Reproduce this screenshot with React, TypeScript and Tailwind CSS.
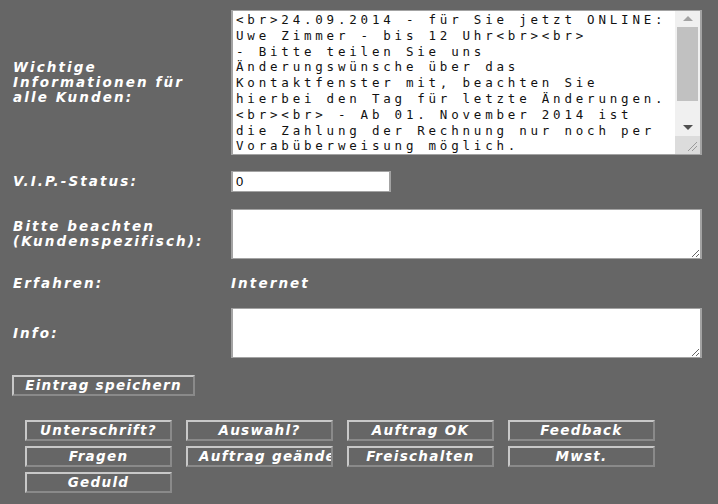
const infoText =
  "<br>24.09.2014 - für Sie jetzt ONLINE:\n" +
  "Uwe Zimmer - bis 12 Uhr<br><br>\n" +
  "- Bitte teilen Sie uns\n" +
  "Änderungswünsche über das\n" +
  "Kontaktfenster mit, beachten Sie\n" +
  "hierbei den Tag für letzte Änderungen.\n" +
  "<br><br> - Ab 01. November 2014 ist\n" +
  "die Zahlung der Rechnung nur noch per\n" +
  "Vorabüberweisung möglich.";

const label =
  "font-['DejaVu_Sans',sans-serif] text-[13.5px] font-bold italic leading-[15px] tracking-[2.1px] text-white";

const field = "border-y border-x-2 border-[#a3a3a3] bg-white";

const actions = [
  "Unterschrift?",
  "Auswahl?",
  "Auftrag OK",
  "Feedback",
  "Fragen",
  "Auftrag geändert",
  "Freischalten",
  "Mwst.",
  "Geduld",
];

function OldButton({ text, className = "" }: { text: string; className?: string }) {
  return (
    <button
      type="button"
      className={
        "block h-[21px] border-2 border-t-[#c8c8c8] border-l-[#c8c8c8] border-r-[#8a8a8a] border-b-[#8a8a8a] bg-[#666666] " +
        className
      }
    >
      <span className="block overflow-hidden whitespace-nowrap px-[11px] text-center font-['DejaVu_Sans',sans-serif] text-[13.5px] font-bold italic leading-[17px] tracking-[1.3px] text-white">
        {text}
      </span>
    </button>
  );
}

function Scrollbar() {
  return (
    <div className="flex w-[25px] shrink-0 flex-col bg-[#f0f0f0]">
      <div className="flex h-[16px] items-center justify-center">
        <svg width="10" height="5" viewBox="0 0 10 5">
          <polygon points="0,5 5,0 10,5" fill="#a3a3a3" />
        </svg>
      </div>
      <div className="mx-[2px] h-[75px] bg-[#c1c1c1]" />
      <div className="h-[17px]" />
      <div className="flex h-[18px] items-center justify-center">
        <svg width="10" height="5" viewBox="0 0 10 5">
          <polygon points="0,0 10,0 5,5" fill="#505050" />
        </svg>
      </div>
      <div className="flex h-[18px] items-end justify-end bg-[#dcdcdc] p-[2px]">
        <svg width="12" height="12" viewBox="0 0 12 12">
          <line x1="2" y1="11" x2="11" y2="2" stroke="#9a9a9a" strokeWidth="1" />
          <line x1="6" y1="11" x2="11" y2="6" stroke="#9a9a9a" strokeWidth="1" />
        </svg>
      </div>
    </div>
  );
}

export default function App() {
  return (
    <main className="min-h-screen w-full bg-[#666666] pl-[12px] pt-[10px]">
      <div className="flex items-center">
        <div className={label + " w-[219px] pl-[1px]"}>
          Wichtige
          <br />
          Informationen für
          <br />
          alle Kunden:
        </div>
        <div className={field + " flex h-[145px] w-[471px]"}>
          <textarea
            readOnly
            defaultValue={infoText}
            className="min-w-0 flex-1 resize-none overflow-hidden whitespace-pre pl-[3px] pt-[1px] font-['DejaVu_Sans_Mono',monospace] text-[12.5px] leading-[15.8px] tracking-[3.8px] text-[#111] outline-none"
          />
          <Scrollbar />
        </div>
      </div>

      <div className="mt-[16px] flex items-center">
        <div className={label + " w-[219px] pl-[1px]"}>V.I.P.-Status:</div>
        <input
          readOnly
          defaultValue="0"
          className={field + " h-[21px] w-[160px] pl-[3px] font-['Liberation_Sans',Arial,sans-serif] text-[13px] tracking-[1px] text-black outline-none"}
        />
      </div>

      <div className="mt-[17px] flex items-center">
        <div className={label + " w-[219px] pl-[1px]"}>
          Bitte beachten
          <br />
          (Kundenspezifisch):
        </div>
        <textarea className={field + " h-[50px] w-[471px] outline-none"} />
      </div>

      <div className="mt-[14px] flex h-[20px] items-center">
        <div className={label + " w-[219px] pl-[1px]"}>Erfahren:</div>
        <div className={label}>Internet</div>
      </div>

      <div className="mt-[15px] flex items-center">
        <div className={label + " w-[219px] pl-[1px]"}>Info:</div>
        <textarea className={field + " h-[50px] w-[471px] outline-none"} />
      </div>

      <OldButton text="Eintrag speichern" className="mt-[17px] w-[183px]" />

      <div className="ml-[13px] mt-[24px] grid w-[631px] grid-cols-[repeat(4,147px)] gap-x-[14px] gap-y-[5px]">
        {actions.map((a) => (
          <OldButton key={a} text={a} className="w-[147px]" />
        ))}
      </div>
    </main>
  );
}
